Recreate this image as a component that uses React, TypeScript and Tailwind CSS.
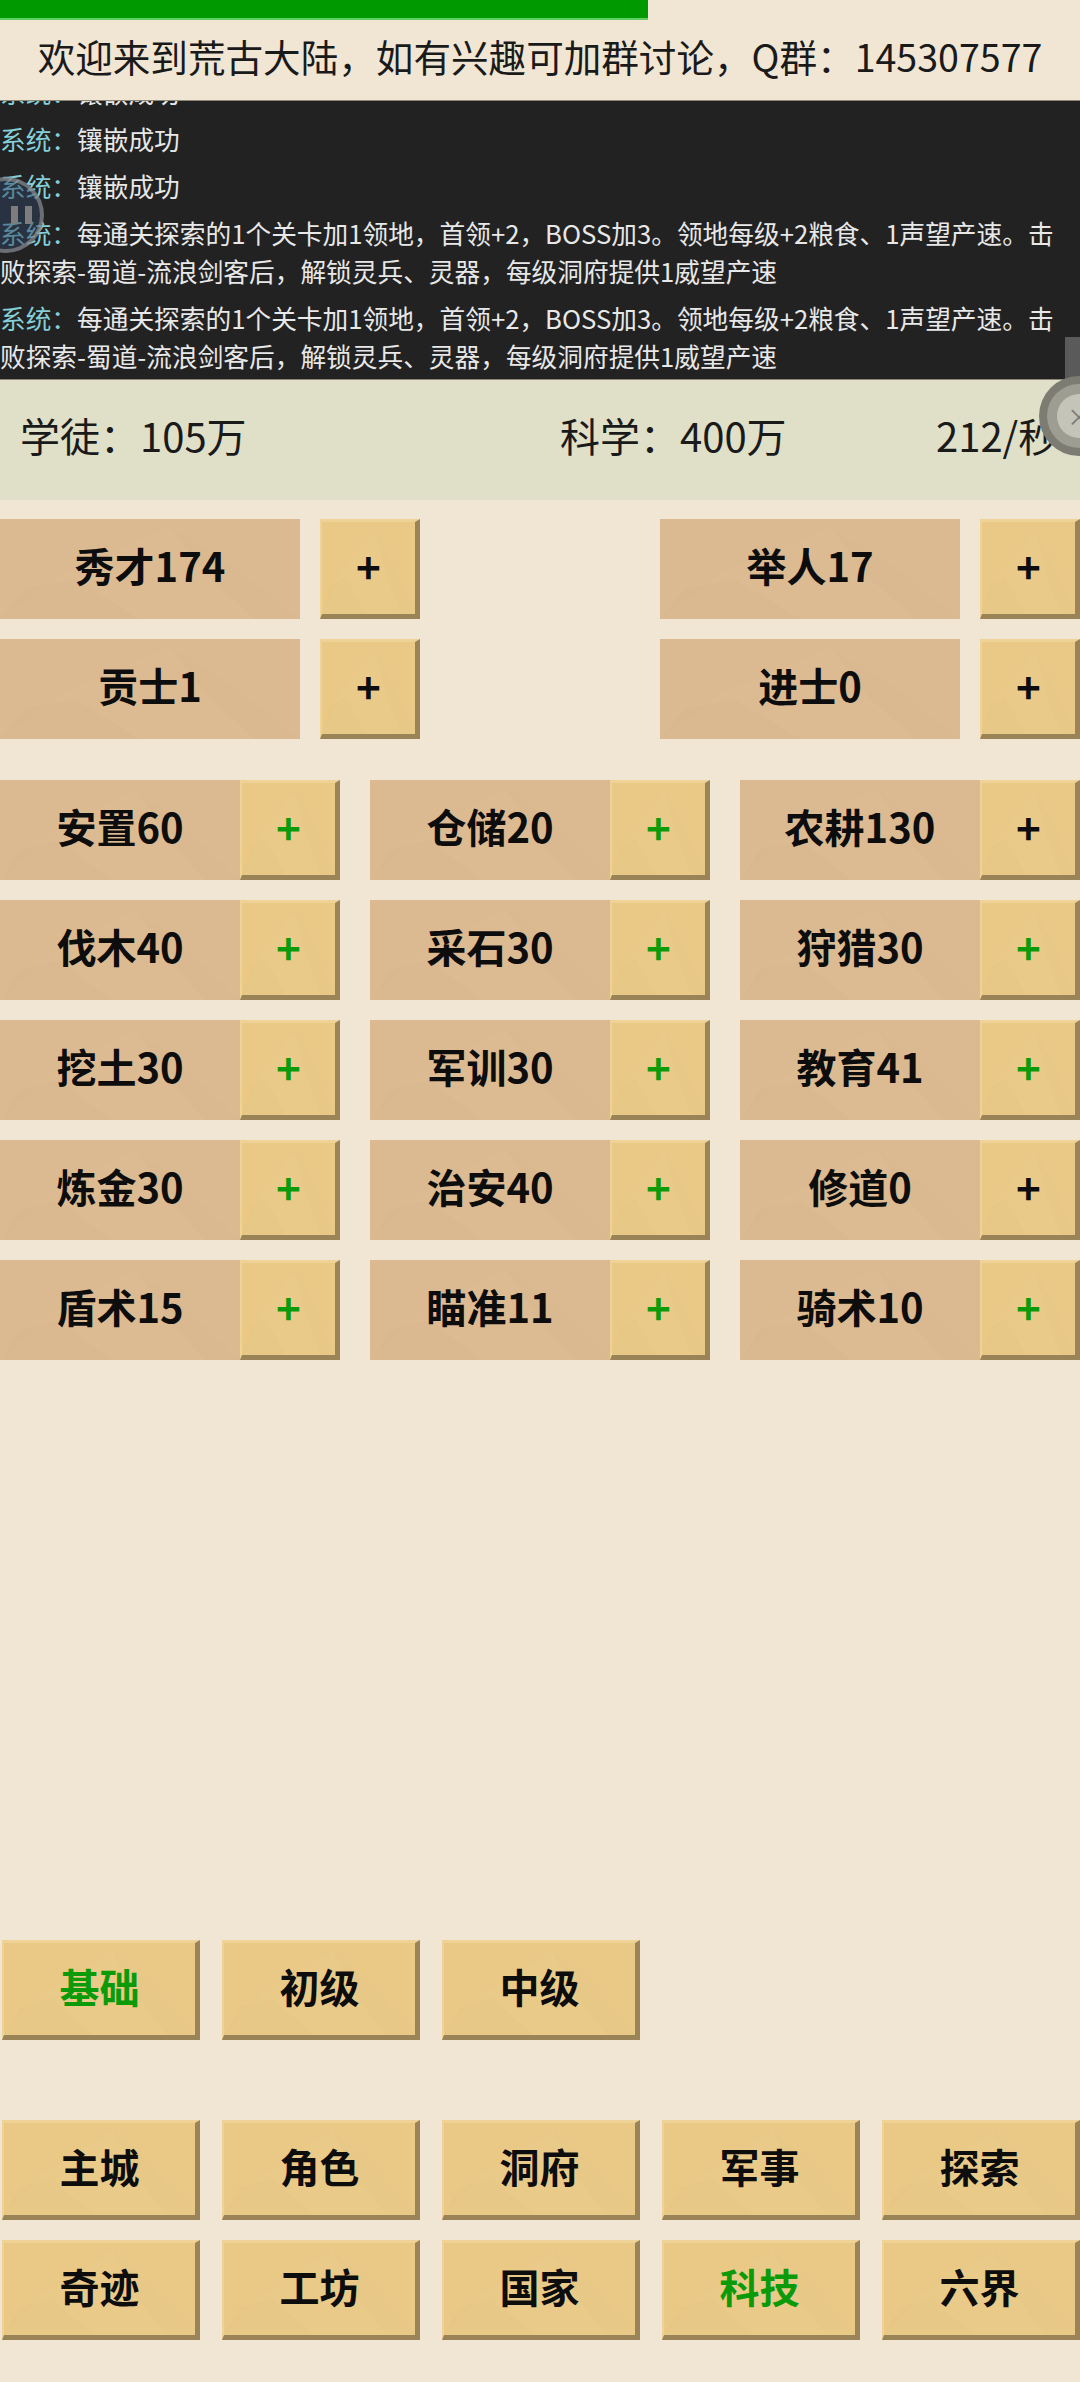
type Skill = { name: string; active?: boolean };

const rankRows = [
  ['秀才174', '举人17'],
  ['贡士1', '进士0'],
];

const skillRows: Skill[][] = [
  [{ name: '安置60', active: true }, { name: '仓储20', active: true }, { name: '农耕130' }],
  [{ name: '伐木40', active: true }, { name: '采石30', active: true }, { name: '狩猎30', active: true }],
  [{ name: '挖土30', active: true }, { name: '军训30', active: true }, { name: '教育41', active: true }],
  [{ name: '炼金30', active: true }, { name: '治安40', active: true }, { name: '修道0' }],
  [{ name: '盾术15', active: true }, { name: '瞄准11', active: true }, { name: '骑术10', active: true }],
];

const navRows = [
  ['主城', '角色', '洞府', '军事', '探索'],
  ['奇迹', '工坊', '国家', '科技', '六界'],
];

const logs = [
  '镶嵌成功',
  '镶嵌成功',
  '镶嵌成功',
  '每通关探索的1个关卡加1领地，首领+2，BOSS加3。领地每级+2粮食、1声望产速。击败探索-蜀道-流浪剑客后，解锁灵兵、灵器，每级洞府提供1威望产速',
  '每通关探索的1个关卡加1领地，首领+2，BOSS加3。领地每级+2粮食、1声望产速。击败探索-蜀道-流浪剑客后，解锁灵兵、灵器，每级洞府提供1威望产速',
];

// faint hills printed on the buttons
function Hills() {
  return (
    <svg className="absolute inset-0 h-full w-full" viewBox="0 0 300 100" preserveAspectRatio="none" aria-hidden="true">
      <polygon points="0,100 60,55 120,30 170,8 230,45 300,100" fill="#ffffff" opacity="0.02" />
      <polygon points="0,100 25,70 75,60 140,100" fill="#8a5a20" opacity="0.02" />
      <polygon points="170,8 210,60 255,100 300,100 230,45" fill="#8a5a20" opacity="0.02" />
    </svg>
  );
}

function Label({ text, width }: { text: string; width: string }) {
  return (
    <div className={`relative flex h-[100px] shrink-0 items-center justify-center bg-[#dcba91] pb-[8px] text-[40px] font-bold text-[#0d0d0d] ${width}`}>
      <Hills />
      <span className="relative">{text}</span>
    </div>
  );
}

function Bevel({ text, active, className }: { text: string; active?: boolean; className: string }) {
  return (
    <button
      className={`relative flex h-[100px] items-center justify-center border-t-[3px] border-r-[5px] border-b-[5px] border-l-[2px] border-t-[#efd296] border-r-[#9b8358] border-b-[#9b8358] border-l-[#efd296] bg-[#eac987] pb-[6px] font-bold ${
        active ? 'text-[#0a9a0a]' : 'text-[#0d0d0d]'
      } ${className}`}
    >
      <Hills />
      <span className="relative">{text}</span>
    </button>
  );
}

export default function App() {
  return (
    <div className="relative h-[2382px] w-[1080px] overflow-hidden bg-[#f0e6d3] font-['Noto_Sans_CJK_SC','Noto_Sans',sans-serif] text-[#111]">
      <div className="h-[20px] w-[648px] border-b-2 border-[#5fcf5f] bg-[#009900]" />

      <div className="flex h-[80px] items-center justify-center pb-[8px] text-[37.6px] whitespace-nowrap text-[#1a1a1a]">
        欢迎来到荒古大陆，如有兴趣可加群讨论，Q群：145307577
      </div>

      <div className="flex h-[280px] flex-col justify-end gap-[9px] overflow-hidden border-y border-[#8c8674] bg-[#222222] pr-[20px] pb-[4px] text-[25.7px] leading-[38px] text-[#e8e8e8]">
        {logs.map((line, i) => (
          <p key={i}>
            <span className="text-[#84cfd8]">系统：</span>
            {line}
          </p>
        ))}
      </div>

      <div className="flex h-[120px] items-center bg-[#e0dfc8] pb-[10px] pl-[20px] text-[40px] text-[#1a1a1a]">
        <span className="w-[540px]">学徒：105万</span>
        <span className="w-[376px]">科学：400万</span>
        <span>212/秒</span>
      </div>

      <div className="mt-[19px] flex flex-col gap-[20px]">
        {rankRows.map((row, i) => (
          <div key={i} className="flex">
            <Label text={row[0]} width="w-[300px]" />
            <Bevel text="+" className="ml-[20px] w-[100px] text-[42px]" />
            <div className="w-[240px]" />
            <Label text={row[1]} width="w-[300px]" />
            <Bevel text="+" className="ml-[20px] w-[100px] text-[42px]" />
          </div>
        ))}
      </div>

      <div className="mt-[41px] flex flex-col gap-[20px]">
        {skillRows.map((row, i) => (
          <div key={i} className="flex justify-between">
            {row.map((skill) => (
              <div key={skill.name} className="flex">
                <Label text={skill.name} width="w-[240px]" />
                <Bevel text="+" active={skill.active} className="w-[100px] text-[42px]" />
              </div>
            ))}
          </div>
        ))}
      </div>

      <div className="mt-[580px] flex gap-[22px] pl-[2px]">
        <Bevel text="基础" active className="w-[198px] text-[40px]" />
        <Bevel text="初级" className="w-[198px] text-[40px]" />
        <Bevel text="中级" className="w-[198px] text-[40px]" />
      </div>

      <div className="mt-[80px] flex flex-col gap-[20px]">
        {navRows.map((row, i) => (
          <div key={i} className="flex gap-[22px] pl-[2px]">
            {row.map((name) => (
              <Bevel key={name} text={name} active={name === '科技'} className="w-[198px] text-[40px]" />
            ))}
          </div>
        ))}
      </div>

      {/* floating pause control on the left edge */}
      <div className="absolute top-[177px] left-[-32px] flex h-[76px] w-[76px] items-center justify-center gap-[7px] rounded-full border-[4px] border-[#9a9a9a]/60 bg-[#2d4260]/50 pl-[30px]">
        <span className="h-[18px] w-[7px] bg-[#7d7d7d]" />
        <span className="h-[18px] w-[7px] bg-[#7d7d7d]" />
      </div>

      {/* floating close control and scroll handle on the right edge */}
      <div className="absolute top-[337px] right-0 h-[42px] w-[15px] bg-[#5a5a5a]" />
      <div className="absolute top-[376px] left-[1039px] flex h-[80px] w-[80px] items-center rounded-full bg-[#7c7c72] pl-[8px]">
        <div className="flex h-[64px] w-[64px] items-center rounded-full bg-[#9d9d92] pl-[10px]">
          <div className="flex h-[44px] w-[44px] items-center justify-center rounded-full bg-[#c4c4b8] text-[24px] text-[#7a7a7a]">
            ×
          </div>
        </div>
      </div>
    </div>
  );
}
